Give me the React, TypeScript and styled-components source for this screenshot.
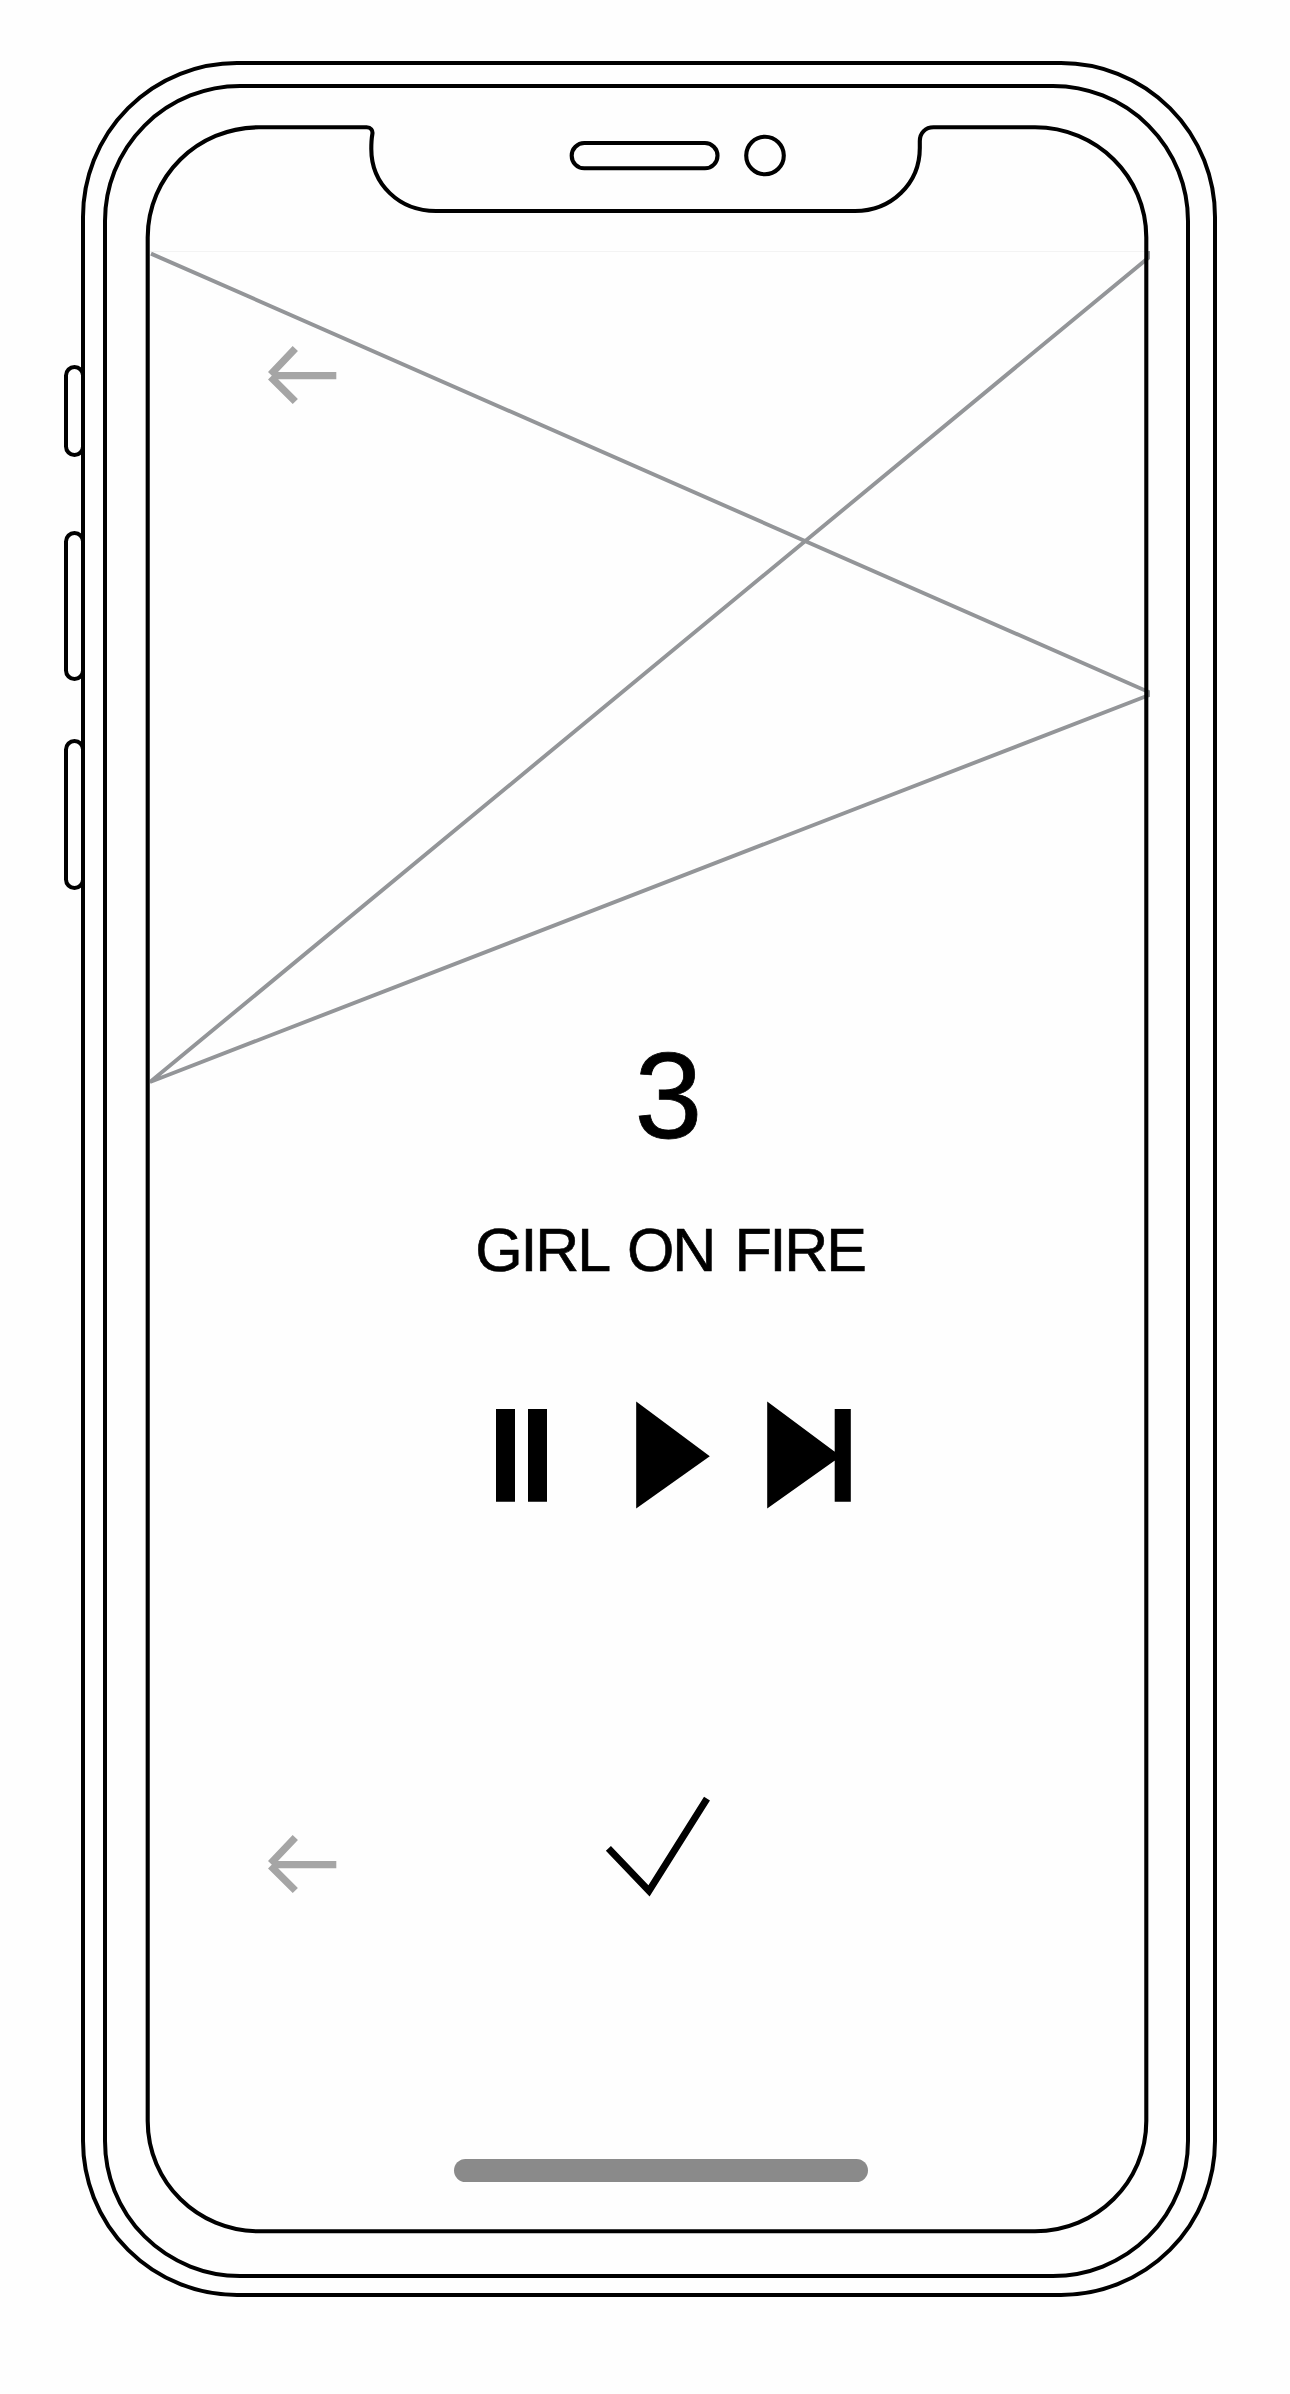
import React from 'react';
import styled, { createGlobalStyle } from 'styled-components';

const ink = '#000';
const paper = '#fefefe';
const wire = '#939598';
const muted = '#a5a5a5';

const GlobalStyle = createGlobalStyle`
  *, *::before, *::after { box-sizing: border-box; }
  body { margin: 0; background: ${paper}; }
`;

const Page = styled.main`
  width: 1290px;
  height: 2394px;
  padding: 61px 0 0 81px;
  overflow: hidden;
  background: ${paper};
  color: ${ink};
  font-family: 'Liberation Sans', Arial, Helvetica, sans-serif;
`;

const Case = styled.div`
  position: relative;
  width: 1136px;
  height: 2236px;
  padding: 19px 0 0 18px;
  border: 4px solid ${ink};
  border-radius: 156px;
`;

const SideButton = styled.span<{ $top: number; $height: number }>`
  position: absolute;
  left: -21px;
  top: ${(p) => p.$top}px;
  width: 21px;
  height: ${(p) => p.$height}px;
  border: 4px solid ${ink};
  border-radius: 10.5px;
`;

const Bezel = styled.div`
  width: 1087px;
  height: 2194px;
  padding: 37px 0 0 39px;
  border: 4px solid ${ink};
  border-radius: 137px;
`;

const Screen = styled.section`
  position: relative;
  display: flex;
  flex-direction: column;
  width: 1002px;
  height: 2108px;
  padding-top: 126px;
`;

const ScreenOutline = styled.svg`
  position: absolute;
  inset: 0;
  width: 1002px;
  height: 2108px;
  overflow: visible;
  pointer-events: none;
`;

const Artwork = styled.div`
  position: relative;
  height: 782px;
  margin-left: 4px;
  padding: 93px 0 0 118px;
  border-top: 1px solid #f3f3f3;
`;

const Wireframe = styled.svg`
  position: absolute;
  left: 0;
  top: -1px;
  width: 1000px;
  height: 834px;
`;

const IconButton = styled.button`
  display: block;
  padding: 0;
  border: 0;
  background: none;
  color: inherit;
  line-height: 0;
`;

const Track = styled.div`
  display: flex;
  flex-direction: column;
  align-items: center;
  width: 1048px;
`;

const TrackNumber = styled.div`
  margin-right: 3px;
  font-size: 122px;
  line-height: 126px;
  -webkit-text-stroke: 0.8px ${ink};
`;

const TrackTitle = styled.h1`
  margin: 59px 0 0;
  font-size: 61px;
  font-weight: 400;
  line-height: 64px;
  letter-spacing: -2.2px;
  word-spacing: 5.6px;
  white-space: nowrap;
  -webkit-text-stroke: 0.6px ${ink};
`;

const Controls = styled.div`
  display: flex;
  align-items: center;
  margin: 119px 0 0 350px;
`;

const ControlSlot = styled.div<{ $width: number }>`
  width: ${(p) => p.$width}px;
`;

const Actions = styled.div`
  display: flex;
  align-items: flex-start;
  gap: 264px;
  margin: 286px 0 0 122px;
`;

const BackSlot = styled.div`
  padding-top: 39px;
`;

const HomeBar = styled.div`
  width: 414px;
  height: 23px;
  margin: 259px 0 0 308px;
  border-radius: 12px;
  background: #8a8a8a;
`;

const BackArrow = () => (
  <svg width="70" height="62" viewBox="0 0 70 62" fill="none" stroke={muted} strokeWidth="7.3">
    <path d="M4 30.7H68.3M2.6 29.5L27.3 3.5M2.6 31.9L27.3 56.5" />
  </svg>
);

const PauseIcon = () => (
  <svg width="51" height="108" viewBox="0 0 51 108" fill={ink}>
    <path d="M0 8H19V100.7H0ZM32 8H51V100.7H32Z" />
  </svg>
);

const PlayIcon = () => (
  <svg width="74" height="108" viewBox="0 0 74 108" fill={ink}>
    <path d="M.2 .6L73.8 55.2L.2 107.4Z" />
  </svg>
);

const NextIcon = () => (
  <svg width="84" height="108" viewBox="0 0 84 108" fill={ink}>
    <path d="M.2 .6L73.8 55.2L.2 107.4ZM67.7 8H83.8V100.7H67.7Z" />
  </svg>
);

const CheckIcon = () => (
  <svg width="110" height="105" viewBox="0 0 110 105" fill="none" stroke={ink} strokeWidth="7">
    <path d="M6.4 53.4L47 95.8L105 3.7" />
  </svg>
);

export default function App() {
  return (
    <>
      <GlobalStyle />
      <Page>
        <Case>
          <SideButton $top={300} $height={92} />
          <SideButton $top={466} $height={150} />
          <SideButton $top={674} $height={151} />
          <Bezel>
            <Screen>
              <Artwork>
                <Wireframe viewBox="150 251 1000 834" fill="none" stroke={wire} strokeWidth="3.9">
                  <path d="M151 253.6L1149.3 692.2V695L150 1082L1149.3 257V251" strokeLinejoin="bevel" />
                </Wireframe>
                <IconButton aria-label="Back">
                  <BackArrow />
                </IconButton>
              </Artwork>
              <Track>
                <TrackNumber>3</TrackNumber>
                <TrackTitle>GIRL ON FIRE</TrackTitle>
              </Track>
              <Controls>
                <ControlSlot $width={140}>
                  <IconButton aria-label="Pause"><PauseIcon /></IconButton>
                </ControlSlot>
                <ControlSlot $width={131}>
                  <IconButton aria-label="Play"><PlayIcon /></IconButton>
                </ControlSlot>
                <ControlSlot $width={84}>
                  <IconButton aria-label="Next"><NextIcon /></IconButton>
                </ControlSlot>
              </Controls>
              <Actions>
                <BackSlot>
                  <IconButton aria-label="Back"><BackArrow /></IconButton>
                </BackSlot>
                <IconButton aria-label="Confirm"><CheckIcon /></IconButton>
              </Actions>
              <HomeBar />
              <ScreenOutline viewBox="146 125 1002 2108" fill="none" stroke={ink} strokeWidth="4.1">
                <path d="M259 127.3H366.7C370.6 127.3 373.2 130 372.3 134.5C371.3 140 371.3 144 371.3 149C371.3 184 399 211 436 211H855C891 211 919.8 184 919.8 148V141C919.8 133 925.5 127.3 933.5 127.3H1035C1096.5 127.3 1146.3 176.5 1146.3 237.5V2121C1146.3 2182 1096.5 2231.3 1035 2231.3H259C197.5 2231.3 147.7 2182 147.7 2121V237.5C147.7 176.5 197.5 127.3 259 127.3Z" />
                <rect x="571.7" y="143" width="145.8" height="25.3" rx="12.6" />
                <circle cx="765" cy="155.5" r="18.8" />
              </ScreenOutline>
            </Screen>
          </Bezel>
        </Case>
      </Page>
    </>
  );
}
